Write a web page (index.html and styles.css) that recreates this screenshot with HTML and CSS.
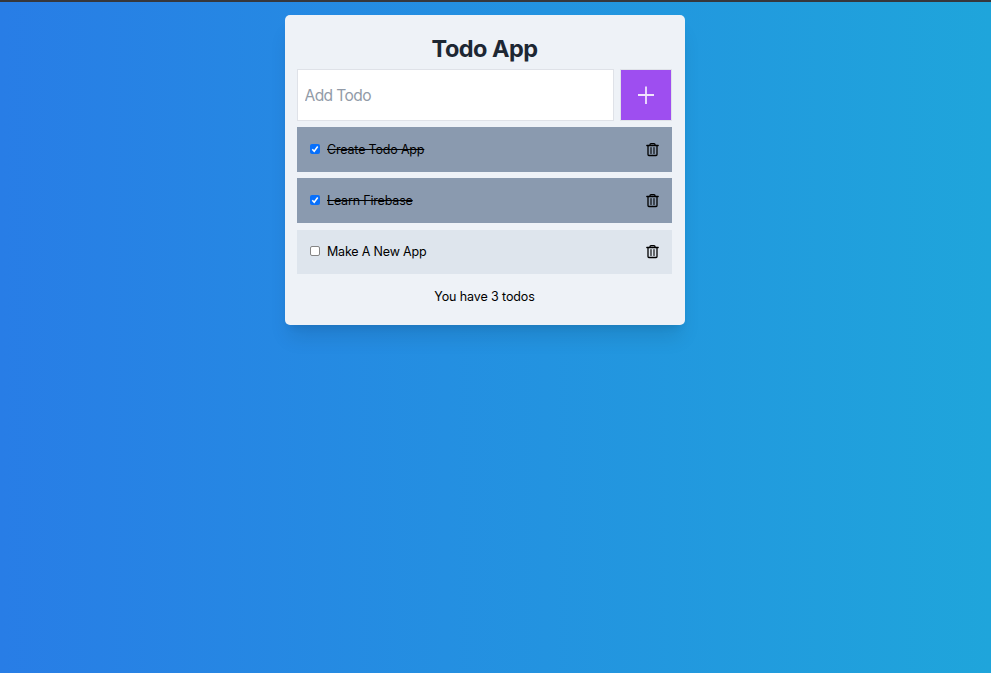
FILE: index.html
```
<!DOCTYPE html>
<html lang="en">
<head>
<meta charset="utf-8">
<title>Todo App</title>
<link rel="stylesheet" href="styles.css">
</head>
<body>
<svg class="defs" aria-hidden="true">
<symbol id="trash" viewBox="0 0 15 15"><path d="M1.800 3.500h11.400M5 3.200V2.600Q5 1.600 6 1.600h3Q10 1.600 10 2.600v.6M3 3.500v9.100q0 .9.9.9h7.200q.9 0 .9-.9V3.500"/><path class="bars" d="M6 5.500v6M9 5.500v6"/></symbol>
</svg>
<main class="card">
  <h1 class="title">Todo App</h1>
  <form class="form">
    <input class="input" type="text" placeholder="Add Todo" aria-label="Add Todo">
    <button class="add" type="button" aria-label="Add"><svg viewBox="0 0 24 24"><path d="M12 3.500v17.500M4 12h16"/></svg></button>
  </form>
  <ul class="list">
    <li class="item done"><span class="check"><svg viewBox="0 0 10 10"><path d="M2.300 5.300l1.900 2L7.700 2.500"/></svg></span><p class="text">Create Todo App</p><svg class="trash"><use href="#trash"/></svg></li>
    <li class="item done"><span class="check"><svg viewBox="0 0 10 10"><path d="M2.300 5.300l1.900 2L7.700 2.500"/></svg></span><p class="text">Learn Firebase</p><svg class="trash"><use href="#trash"/></svg></li>
    <li class="item"><span class="check"></span><p class="text">Make A New App</p><svg class="trash"><use href="#trash"/></svg></li>
  </ul>
  <p class="count">You have 3 todos</p>
</main>
</body>
</html>
```
FILE: styles.css
```
* { box-sizing: border-box; }
body {
  margin: 0;
  min-height: 673px;
  padding-top: 13px;
  border-top: 2px solid #36373c;
  background: linear-gradient(to right, #287de6, #1fa5db);
  background-origin: border-box;
  font-family: Inter, "Liberation Sans", sans-serif;
  font-size: 12.5px;
  color: #000;
}
.defs { display: none; }
.card {
  width: 400px;
  height: 310px;
  margin-left: 285px;
  padding: 17px 13px 0 12px;
  border-radius: 5px;
  background: #eef2f7;
  box-shadow: 0 16px 20px -4px rgba(0, 0, 0, .1), 0 6px 8px -5px rgba(0, 0, 0, .1);
}
.title {
  margin: 0;
  height: 37px;
  line-height: 33px;
  font-size: 23.5px;
  font-weight: 700;
  letter-spacing: -.55px;
  text-align: center;
  color: #1d2733;
}
.form { display: flex; justify-content: space-between; margin: 0; }
.input {
  width: 317px;
  height: 52px;
  padding: 0 6.5px;
  border: 1px solid #dfe2e8;
  border-radius: 0;
  background: #fff;
  font: 15.6px Inter, "Liberation Sans", sans-serif;
  letter-spacing: -.6px;
}
.input::placeholder { color: #929ba8; }
.add {
  display: grid;
  place-items: center;
  width: 52px;
  height: 52px;
  padding: 0 1px 0 0;
  border: 1px solid #dfe2e8;
  background: #9e4ef0;
}
.add svg { width: 24px; height: 24px; fill: none; stroke: #f0e5fd; stroke-width: 1.8; }
.list {
  display: grid;
  gap: 6px;
  margin: 6px 0 0;
  padding: 0;
  list-style: none;
}
.item {
  display: flex;
  align-items: center;
  height: 45px;
  padding: 0 12px 0 13px;
  background: #dee5ed;
}
.item:last-child { height: 44px; margin-top: 1px; }
.done { background: #8a9aaf; }
.check {
  width: 10px;
  height: 10px;
  margin-bottom: 1px;
  border: 1px solid #858585;
  border-radius: 2px;
  background: #fff;
}
.item:last-child .check { margin-bottom: 2px; }
.done .check { border: 0; background: #0870fb; }
.check svg { display: block; width: 10px; height: 10px; fill: none; stroke: #fff; stroke-width: 1.5; }
.text { flex: 1; margin: 0 0 0 7px; line-height: 20px; letter-spacing: -.18px; }
.done .text { text-decoration: line-through; }
.trash { width: 15px; height: 15px; fill: none; stroke: #000; stroke-width: 1.3; stroke-linecap: round; stroke-linejoin: round; }
.item:last-child .trash { margin-bottom: 1px; }
.bars { stroke-width: 1.1; }
.count { margin: 13px 0 0; line-height: 20px; text-align: center; letter-spacing: -.11px; }
```
